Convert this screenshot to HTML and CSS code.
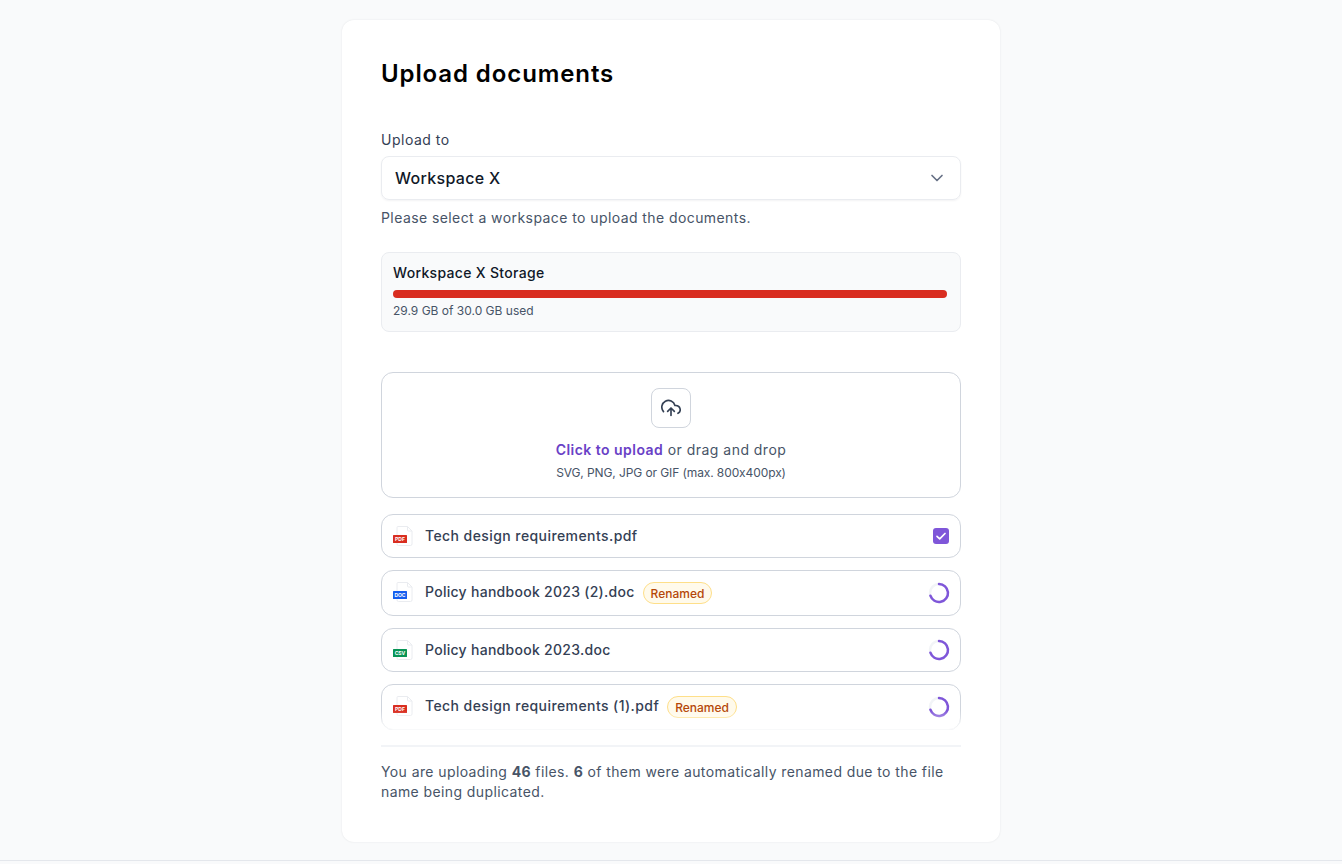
FILE: index.html
```html
<!DOCTYPE html>
<html lang="en">
<head>
<meta charset="utf-8">
<title>Upload documents</title>
<link rel="stylesheet" href="styles.css">
</head>
<body>
<div class="page">
  <main class="card">
    <h1 class="title">Upload documents</h1>
    <label class="label">Upload to</label>
    <div class="select">
      <span>Workspace X</span>
      <svg width="20" height="20" viewBox="0 0 20 20" fill="none"><path d="M5 7.5l5 5 5-5" stroke="#667085" stroke-width="1.67" stroke-linecap="round" stroke-linejoin="round"/></svg>
    </div>
    <p class="hint">Please select a workspace to upload the documents.</p>
    <section class="storage">
      <div class="storage-name">Workspace X Storage</div>
      <div class="bar"><div class="bar-fill"></div></div>
      <div class="storage-used">29.9 GB of 30.0 GB used</div>
    </section>
    <section class="drop">
      <div class="drop-icon">
        <svg width="20" height="20" viewBox="0 0 20 20" fill="none"><path d="M6.67 13.33L10 10l3.33 3.33M10 10v7.5M16.99 15.33A4.17 4.17 0 0 0 15 7.5h-1.05A6.67 6.67 0 1 0 2.5 13.58" stroke="#344054" stroke-width="1.67" stroke-linecap="round" stroke-linejoin="round"/></svg>
      </div>
      <div class="drop-line"><strong>Click to upload</strong> or drag and drop</div>
      <div class="drop-sub">SVG, PNG, JPG or GIF (max. 800x400px)</div>
    </section>
    <ul class="files">
      <li class="file h44">
        <svg class="ficon" width="24" height="24" viewBox="0 0 24 24" fill="none"><path d="M5 2.5h9.5L19 7v13a1.5 1.5 0 0 1-1.5 1.5h-12A1.5 1.5 0 0 1 4 20V3.5a1 1 0 0 1 1-1z" fill="#fff" stroke="#eaecf0"/><path d="M14.5 2.5V6a1 1 0 0 0 1 1H19" stroke="#eaecf0"/><rect x="0" y="11" width="14" height="8" rx="0.5" fill="#d92d20"/><text x="7" y="17" class="ftext">PDF</text></svg>
        <span class="fname wide">Tech design requirements.pdf</span>
        <span class="status"><svg width="16" height="16" viewBox="0 0 16 16"><rect width="16" height="16" rx="3" fill="#7f56d9"/><path d="M4 8.3l2.7 2.5L12 5.5" fill="none" stroke="#fff" stroke-width="1.7" stroke-linecap="round" stroke-linejoin="round"/></svg></span>
      </li>
      <li class="file h46">
        <svg class="ficon" width="24" height="24" viewBox="0 0 24 24" fill="none"><path d="M5 2.5h9.5L19 7v13a1.5 1.5 0 0 1-1.5 1.5h-12A1.5 1.5 0 0 1 4 20V3.5a1 1 0 0 1 1-1z" fill="#fff" stroke="#eaecf0"/><path d="M14.5 2.5V6a1 1 0 0 0 1 1H19" stroke="#eaecf0"/><rect x="0" y="11" width="14" height="8" rx="0.5" fill="#155eef"/><text x="7" y="17" class="ftext">DOC</text></svg>
        <span class="fname">Policy handbook 2023 (2).doc</span>
        <span class="badge">Renamed</span>
        <span class="status spin"><svg width="24" height="24" viewBox="0 0 24 24" fill="none"><circle cx="12" cy="12" r="9" stroke="#f2f4f7" stroke-width="2.5"/><path d="M12 3a9 9 0 1 1-8.6 11.7" stroke="#7f56d9" stroke-width="2.5" stroke-linecap="round"/></svg></span>
      </li>
      <li class="file h44">
        <svg class="ficon" width="24" height="24" viewBox="0 0 24 24" fill="none"><path d="M5 2.5h9.5L19 7v13a1.5 1.5 0 0 1-1.5 1.5h-12A1.5 1.5 0 0 1 4 20V3.5a1 1 0 0 1 1-1z" fill="#fff" stroke="#eaecf0"/><path d="M14.5 2.5V6a1 1 0 0 0 1 1H19" stroke="#eaecf0"/><rect x="0" y="11" width="14" height="8" rx="0.5" fill="#079455"/><text x="7" y="17" class="ftext">CSV</text></svg>
        <span class="fname">Policy handbook 2023.doc</span>
        <span class="status spin"><svg width="24" height="24" viewBox="0 0 24 24" fill="none"><circle cx="12" cy="12" r="9" stroke="#f2f4f7" stroke-width="2.5"/><path d="M12 3a9 9 0 1 1-8.6 11.7" stroke="#7f56d9" stroke-width="2.5" stroke-linecap="round"/></svg></span>
      </li>
      <li class="file h46 faded">
        <svg class="ficon" width="24" height="24" viewBox="0 0 24 24" fill="none"><path d="M5 2.5h9.5L19 7v13a1.5 1.5 0 0 1-1.5 1.5h-12A1.5 1.5 0 0 1 4 20V3.5a1 1 0 0 1 1-1z" fill="#fff" stroke="#eaecf0"/><path d="M14.5 2.5V6a1 1 0 0 0 1 1H19" stroke="#eaecf0"/><rect x="0" y="11" width="14" height="8" rx="0.5" fill="#d92d20"/><text x="7" y="17" class="ftext">PDF</text></svg>
        <span class="fname wide">Tech design requirements (1).pdf</span>
        <span class="badge">Renamed</span>
        <span class="status spin"><svg width="24" height="24" viewBox="0 0 24 24" fill="none"><circle cx="12" cy="12" r="9" stroke="#f2f4f7" stroke-width="2.5"/><path d="M12 3a9 9 0 1 1-8.6 11.7" stroke="#7f56d9" stroke-width="2.5" stroke-linecap="round"/></svg></span>
      </li>
    </ul>
    <p class="summary">You are uploading <b>46</b> files. <b>6</b> of them were automatically renamed due to the file name being duplicated.</p>
  </main>
</div>
</body>
</html>
```
FILE: styles.css
```css
* { box-sizing: border-box; }
html, body { margin: 0; padding: 0; }
body {
  background: #f9fafb;
  font-family: "Inter", "Liberation Sans", sans-serif;
  font-feature-settings: "calt" 0;
  color: #475467;
  height: 864px;
  overflow: hidden;
}
.page {
  height: 861px;
  padding-top: 20px;
  border-bottom: 1px solid #e4e7ec;
  display: flex;
  justify-content: center;
}
.card {
  width: 658px;
  height: 822px;
  background: #fff;
  border-radius: 12px;
  box-shadow: 0 0 2px rgba(16, 24, 40, 0.1);
  padding: 39px;
}
.title {
  margin: 0;
  font-size: 24px;
  line-height: 30px;
  font-weight: 600;
  color: #000;
  letter-spacing: 0.9px;
}
.label {
  display: block;
  margin-top: 41px;
  font-size: 14px;
  line-height: 20px;
  font-weight: 400;
  color: #344054;
  letter-spacing: 0.5px;
}
.select {
  margin-top: 6px;
  height: 44px;
  display: flex;
  align-items: center;
  justify-content: space-between;
  padding: 0 13px;
  border: 1px solid #eaecf0;
  border-radius: 8px;
  box-shadow: 0 1px 2px rgba(16, 24, 40, 0.05);
  font-size: 16px;
  font-weight: 500;
  color: #101828;
  letter-spacing: 0.3px;
}
.hint {
  margin: 8px 0 0;
  font-size: 14px;
  line-height: 20px;
  color: #475467;
  letter-spacing: 0.42px;
}
.storage {
  margin-top: 24px;
  height: 80px;
  padding: 11px 13px 11px 11px;
  background: #f9fafb;
  border: 1px solid #eaecf0;
  border-radius: 8px;
}
.storage-name {
  font-size: 14px;
  line-height: 18px;
  font-weight: 500;
  color: #101828;
  letter-spacing: 0.32px;
}
.bar {
  margin-top: 8px;
  height: 8px;
  border-radius: 4px;
  background: #eaecf0;
}
.bar-fill {
  width: 100%;
  height: 100%;
  border-radius: 4px;
  background: #d92d20;
}
.storage-used {
  margin-top: 4px;
  font-size: 12px;
  line-height: 18px;
  color: #475467;
}
.drop {
  margin-top: 40px;
  height: 126px;
  border: 1px solid #d0d5dd;
  border-radius: 12px;
  padding-top: 15px;
  display: flex;
  flex-direction: column;
  align-items: center;
}
.drop-icon {
  width: 40px;
  height: 40px;
  display: flex;
  align-items: center;
  justify-content: center;
  border: 1px solid #d0d5dd;
  border-radius: 8px;
}
.drop-line {
  margin-top: 12px;
  font-size: 14px;
  line-height: 20px;
  letter-spacing: 0.47px;
}
.drop-line strong { font-weight: 600; color: #6941c6; }
.drop-sub {
  margin-top: 4px;
  font-size: 12px;
  line-height: 18px;
  letter-spacing: -0.1px;
}
.files {
  list-style: none;
  margin: 16px 0 0;
  padding: 0;
  display: flex;
  flex-direction: column;
  gap: 12px;
}
.file {
  position: relative;
  display: flex;
  align-items: center;
  padding: 0 11px;
  border: 1px solid #d0d5dd;
  border-radius: 12px;
}
.h44 { height: 44px; }
.h46 { height: 46px; }
.h46 .fname, .h46 .ficon { margin-bottom: 2px; }
.faded::after {
  content: "";
  position: absolute;
  inset: -1px;
  border-radius: 12px;
  pointer-events: none;
  background: linear-gradient(to bottom, rgba(255, 255, 255, 0) 58%, rgba(255, 255, 255, 0.88) 100%);
}
.ficon { flex: none; }
.ftext {
  font: 700 5px "Inter", sans-serif;
  fill: #fff;
  text-anchor: middle;
}
.fname {
  margin-left: 8px;
  font-size: 14px;
  line-height: 20px;
  font-weight: 500;
  color: #344054;
  letter-spacing: 0.28px;
}
.fname.wide { letter-spacing: 0.42px; }
.badge {
  margin-left: 8px;
  height: 22px;
  padding: 0 7px;
  display: flex;
  align-items: center;
  font-size: 12px;
  font-weight: 500;
  color: #b54708;
  background: #fffaeb;
  border: 1px solid #fedf89;
  border-radius: 11px;
}
.status {
  margin-left: auto;
  display: flex;
  align-items: center;
}
.status.spin { margin-right: -2px; }
.summary {
  margin: 15px 0 0;
  padding-top: 15px;
  border-top: 2px solid #f2f4f7;
  font-size: 14px;
  line-height: 20px;
  letter-spacing: 0.4px;
  color: #475467;
}
.summary b { font-weight: 700; color: #475467; }
```
